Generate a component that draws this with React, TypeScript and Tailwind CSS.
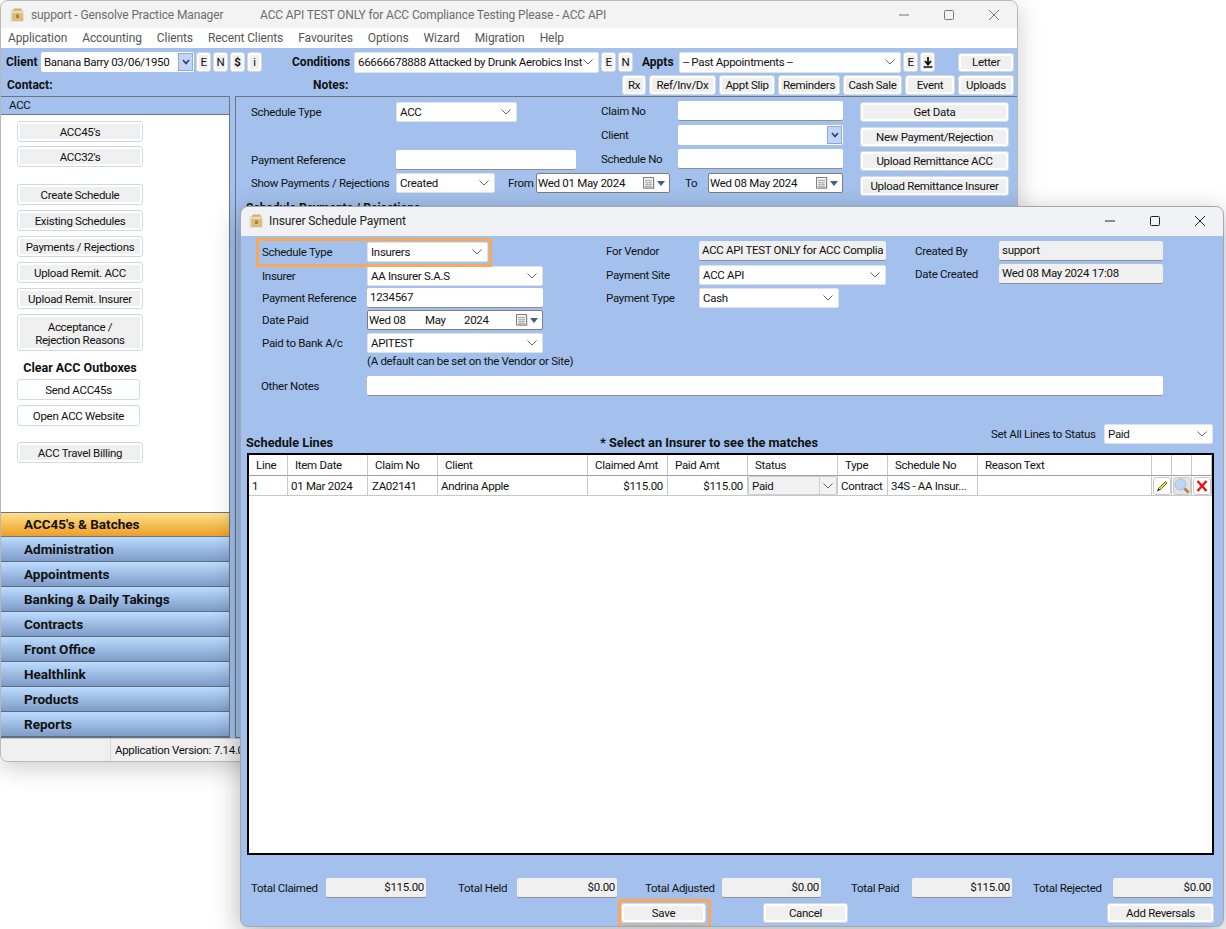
import type { ReactNode } from "react";

const columns = [
  "Line",
  "Item Date",
  "Claim No",
  "Client",
  "Claimed Amt",
  "Paid Amt",
  "Status",
  "Type",
  "Schedule No",
  "Reason Text",
  "",
  "",
  ""
];

const navItems = [
  "Administration",
  "Appointments",
  "Banking & Daily Takings",
  "Contracts",
  "Front Office",
  "Healthlink",
  "Products",
  "Reports"
];

const totals = [
  { label: "Total Claimed", value: "$115.00", className: "ml-[10px] w-[75px]", box: "w-[100px]" },
  { label: "Total Held", value: "$0.00", className: "ml-[32px] w-[59px]", box: "w-[100px]" },
  { label: "Total Adjusted", value: "$0.00", className: "ml-[28px] w-[77px]", box: "w-[99px]" },
  { label: "Total Paid", value: "$115.00", className: "ml-[30px] w-[61px]", box: "w-[100px]" },
  { label: "Total Rejected", value: "$0.00", className: "ml-[21px] w-[80px]", box: "w-[100px]" }
];

function BoxIcon({ className = "" }: { className?: string }) {
  return (
    <svg viewBox="0 0 14 14" className={`h-[14px] w-[14px] shrink-0 ${className}`}>
      <rect x="0" y="2" width="14" height="12" rx="1.5" fill="#d8d8d8" opacity="0.6" />
      <path d="M2 4 3.5 1h8L13 4v9H2z" fill="#dcbd7c" />
      <path d="M2 4h11" stroke="#f4e3b8" strokeWidth="1.4" />
      <path d="M3.5 1h8" stroke="#bfa06a" strokeWidth="0.8" />
      <rect x="6" y="6.5" width="3" height="3.5" fill="#a5833f" />
    </svg>
  );
}

function WindowControls({ dark }: { dark?: boolean }) {
  const stroke = dark ? "#222" : "#777";
  return (
    <div className="ml-auto flex items-center">
      <svg viewBox="0 0 10 10" className="h-[10px] w-[10px]">
        <path d="M0 5h10" stroke={stroke} strokeWidth="1" />
      </svg>
      <svg viewBox="0 0 10 10" className="ml-[35px] h-[10px] w-[10px]">
        <rect x="0.5" y="0.5" width="9" height="9" rx="1" fill="none" stroke={stroke} />
      </svg>
      <svg viewBox="0 0 10 10" className="ml-[35px] h-[10px] w-[10px]">
        <path d="M0 0 10 10M10 0 0 10" stroke={stroke} strokeWidth="1" />
      </svg>
    </div>
  );
}

function Chevron({ className = "" }: { className?: string }) {
  return (
    <svg viewBox="0 0 10 6" className={`h-[6px] w-[10px] shrink-0 ${className}`}>
      <path d="M0.5 0.5 5 5 9.5 0.5" fill="none" stroke="#666" strokeWidth="1" />
    </svg>
  );
}

function Label({ children, className = "" }: { children: ReactNode; className?: string }) {
  return <span className={`shrink-0 whitespace-nowrap pt-[2px] ${className}`}>{children}</span>;
}

function Btn({ children, className = "" }: { children: ReactNode; className?: string }) {
  return (
    <div
      className={`flex shrink-0 items-center justify-center rounded-[3px] border border-[#d3d9e2] bg-[#f0f0f0] pt-[2px] text-center text-[#111] shadow-[inset_0_0_0_2px_#fff] ${className}`}
    >
      {children}
    </div>
  );
}

function Combo({ value, className = "" }: { value: string; className?: string }) {
  return (
    <div
      className={`flex shrink-0 items-center justify-between overflow-hidden whitespace-nowrap rounded-[2px] border border-[#dde3ec] bg-white pl-[3px] pr-[5px] text-[#111] ${className}`}
    >
      <span className="overflow-hidden pt-[2px]">{value}</span>
      <Chevron />
    </div>
  );
}

function BlueCombo({ value, className = "" }: { value: string; className?: string }) {
  return (
    <div className={`flex shrink-0 items-center overflow-hidden whitespace-nowrap rounded-[2px] bg-white pl-[3px] text-[#111] ${className}`}>
      <span className="flex-1 pt-[1px]">{value}</span>
      <div className="mr-px flex h-[calc(100%-2px)] w-[15px] items-center justify-center border border-[#8fa9dc] bg-[#c3d5f6]">
        <svg viewBox="0 0 8 6" className="h-[6px] w-[8px]">
          <path d="M1 1 4 4.5 7 1" fill="none" stroke="#2d3f66" strokeWidth="1.6" />
        </svg>
      </div>
    </div>
  );
}

function TextBox({ value = "", className = "" }: { value?: string; className?: string }) {
  return (
    <div
      className={`flex shrink-0 items-center overflow-hidden whitespace-nowrap rounded-[2px] border-b border-b-[#8f8f8f] bg-white px-[3px] pt-[1px] text-[#111] ${className}`}
    >
      {value}
    </div>
  );
}

function ReadBox({ value, className = "" }: { value: string; className?: string }) {
  return (
    <div
      className={`flex shrink-0 items-center overflow-hidden whitespace-nowrap rounded-[2px] border-b border-b-[#8f8f8f] bg-[#f0f0f0] px-[3px] pt-[1px] text-[#111] ${className}`}
    >
      {value}
    </div>
  );
}

function DateBox({ children, className = "" }: { children: ReactNode; className?: string }) {
  return (
    <div
      className={`flex shrink-0 items-center whitespace-nowrap rounded-[2px] border border-[#7d7d7d] bg-white pl-[1px] pr-[4px] text-[#111] ${className}`}
    >
      <div className="flex-1 pt-[1px]">{children}</div>
      <svg viewBox="0 0 12 12" className="h-[12px] w-[12px]">
        <rect x="1.5" y="1.5" width="10" height="10.5" fill="#c9c9c9" />
        <rect x="0.5" y="0.5" width="10" height="10.5" fill="#efefef" stroke="#85807a" />
        <path d="M2 3h7v1H2z" fill="#a8a8a8" />
        <path d="M2 5.5h7M2 7.5h7M2 9.5h7M4 5v5M7 5v5" stroke="#a8a8a8" strokeWidth="0.8" />
      </svg>
      <svg viewBox="0 0 8 5" className="ml-[2px] h-[5px] w-[8px]">
        <path d="M0 0h8L4 5z" fill="#3f5f8f" />
      </svg>
    </div>
  );
}

function Bold({ children, className = "", size = "text-[12px]" }: { children: ReactNode; className?: string; size?: string }) {
  return <span className={`whitespace-nowrap font-bold leading-[14px] tracking-normal text-[#111] ${size} ${className}`}>{children}</span>;
}

function LeftBtn({ children, className = "", height = "h-[21px]" }: { children: ReactNode; className?: string; height?: string }) {
  return <Btn className={`w-[126px] border-[#c8c8c8] ${height} ${className}`}>{children}</Btn>;
}

function MainWindow() {
  return (
    <div className="absolute left-0 top-0 flex h-[762px] w-[1018px] flex-col overflow-hidden rounded-[8px] border border-[#b8b8b8] bg-[#f0f0f0] shadow-[0_6px_24px_rgba(0,0,0,0.2)]">
      <div className="flex h-[27px] shrink-0 items-center bg-[#f3f3f3] pl-[9px] pr-[18px] text-[12px] tracking-[-0.13px] text-[#6d6d6d]">
        <BoxIcon />
        <span className="ml-[7px] w-[229px]">support - Gensolve Practice Manager</span>
        <span>ACC API TEST ONLY for ACC Compliance Testing Please - ACC API</span>
        <WindowControls />
      </div>

      <div className="flex h-[20px] shrink-0 items-center gap-[15px] bg-white pl-[7px] text-[12px] tracking-[-0.1px] text-[#555]">
        {["Application", "Accounting", "Clients", "Recent Clients", "Favourites", "Options", "Wizard", "Migration", "Help"].map(
          (item) => (
            <span key={item}>{item}</span>
          )
        )}
      </div>

      <div className="flex h-[48px] shrink-0 flex-col bg-[#a3c1ec]">
        <div className="mt-[3px] flex h-[22px] items-center pl-[5px]">
          <Bold className="w-[35px]">Client</Bold>
          <BlueCombo value="Banana Barry 03/06/1950" className="h-[20px] w-[153px]" />
          <div className="ml-[2px] flex gap-[2px]">
            <Btn className="h-[20px] w-[15px]">E</Btn>
            <Btn className="h-[20px] w-[15px]">N</Btn>
            <Btn className="h-[20px] w-[15px] font-bold">$</Btn>
            <Btn className="h-[20px] w-[15px]">i</Btn>
          </div>
          <Bold className="ml-[30px] w-[62px]">Conditions</Bold>
          <Combo value="66666678888 Attacked by Drunk Aerobics Inst" className="h-[21px] w-[245px]" />
          <Btn className="ml-[2px] h-[20px] w-[15px]">E</Btn>
          <Btn className="ml-[2px] h-[20px] w-[15px]">N</Btn>
          <Bold className="ml-[9px] w-[37px]">Appts</Bold>
          <Combo value="-- Past Appointments --" className="h-[21px] w-[222px]" />
          <Btn className="ml-[2px] h-[20px] w-[15px]">E</Btn>
          <Btn className="ml-[2px] h-[20px] w-[15px] !pt-0">
            <svg viewBox="0 0 10 11" className="h-[11px] w-[10px]">
              <path d="M5 0v6M2 4l3 3.5L8 4" fill="none" stroke="#111" strokeWidth="1.8" />
              <path d="M0.5 10h9" stroke="#111" strokeWidth="1.4" />
            </svg>
          </Btn>
          <Btn className="ml-[23px] h-[19px] w-[56px]">Letter</Btn>
        </div>
        <div className="mt-[1px] flex h-[21px] items-center pl-[6px]">
          <Bold className="w-[306px]">Contact:</Bold>
          <Bold>Notes:</Bold>
          <div className="ml-auto mr-[3px] flex gap-[3px]">
            <Btn className="h-[20px] w-[24px]">Rx</Btn>
            <Btn className="h-[20px] w-[67px]">Ref/Inv/Dx</Btn>
            <Btn className="h-[20px] w-[56px]">Appt Slip</Btn>
            <Btn className="h-[20px] w-[62px]">Reminders</Btn>
            <Btn className="h-[20px] w-[59px]">Cash Sale</Btn>
            <Btn className="h-[20px] w-[50px]">Event</Btn>
            <Btn className="h-[20px] w-[56px]">Uploads</Btn>
          </div>
        </div>
      </div>

      <div className="flex min-h-0 flex-1 bg-[#a3c1ec]">
        <div className="flex w-[229px] shrink-0 flex-col border border-l-0 border-[#6c7480] bg-white">
          <div className="flex h-[18px] shrink-0 items-center border-b border-[#6c7480] bg-[#a3c1ec] pl-[8px] pt-[1px] text-[#111]">ACC</div>
          <div className="flex flex-1 flex-col items-start pl-[16px] pt-[6px]">
            <LeftBtn>ACC45's</LeftBtn>
            <LeftBtn className="mt-[4px]">ACC32's</LeftBtn>
            <LeftBtn className="mt-[17px]">Create Schedule</LeftBtn>
            <LeftBtn className="mt-[5px]">Existing Schedules</LeftBtn>
            <LeftBtn className="mt-[5px]">Payments / Rejections</LeftBtn>
            <LeftBtn className="mt-[5px]">Upload Remit. ACC</LeftBtn>
            <LeftBtn className="mt-[5px]">Upload Remit. Insurer</LeftBtn>
            <LeftBtn className="mt-[5px] leading-[13px]" height="h-[37px]">
              Acceptance /<br />
              Rejection Reasons
            </LeftBtn>
            <Bold className="mt-[10px] w-[126px] text-center" size="text-[12.5px]">
              Clear ACC Outboxes
            </Bold>
            <Btn className="mt-[4px] h-[21px] w-[123px] border-[#c8c8c8] bg-white">Send ACC45s</Btn>
            <Btn className="mt-[5px] h-[21px] w-[123px] border-[#c8c8c8] bg-white">Open ACC Website</Btn>
            <LeftBtn className="mt-[16px]">ACC Travel Billing</LeftBtn>
          </div>
          <div className="flex h-[25px] shrink-0 items-center border-y border-[#6c7480] bg-[linear-gradient(#fde08c,#ef9f25)] pl-[23px] text-[13.5px] font-bold tracking-normal text-[#111]">
            ACC45's &amp; Batches
          </div>
          {navItems.map((item) => (
            <div
              key={item}
              className="flex h-[25px] shrink-0 items-center border-b border-[#5f6b7c] bg-[linear-gradient(#bcdcff,#7e9cc8)] pl-[23px] text-[13.5px] font-bold tracking-normal text-[#111]"
            >
              {item}
            </div>
          ))}
        </div>

        <div className="ml-[5px] flex min-w-0 flex-1 flex-col border border-r-0 border-[#6c7480] bg-[#a3c1ec] pl-[15px] text-[#111]">
          <div className="flex">
            <div className="mt-[5px] flex w-[350px] shrink-0 flex-col">
              <div className="flex h-[20px] items-center">
                <Label className="w-[145px]">Schedule Type</Label>
                <Combo value="ACC" className="h-[20px] w-[121px]" />
              </div>
              <div className="mt-[28px] flex h-[20px] items-center">
                <Label className="w-[145px]">Payment Reference</Label>
                <TextBox className="h-[20px] w-[180px]" />
              </div>
              <div className="mt-[3px] flex h-[20px] items-center">
                <Label className="w-[145px]">Show Payments / Rejections</Label>
                <Combo value="Created" className="h-[20px] w-[99px]" />
                <Label className="ml-[13px] w-[28px]">From</Label>
                <DateBox className="h-[20px] w-[134px]">Wed 01 May 2024</DateBox>
              </div>
            </div>
            <div className="mt-[4px] flex w-[243px] shrink-0 flex-col">
              <div className="flex h-[20px] items-center">
                <Label className="w-[77px]">Claim No</Label>
                <TextBox className="h-[20px] w-[165px]" />
              </div>
              <div className="mt-[4px] flex h-[20px] items-center">
                <Label className="w-[77px]">Client</Label>
                <BlueCombo value="" className="h-[20px] w-[165px]" />
              </div>
              <div className="mt-[4px] flex h-[20px] items-center">
                <Label className="w-[77px]">Schedule No</Label>
                <TextBox className="h-[20px] w-[165px]" />
              </div>
              <div className="mt-[4px] flex h-[20px] items-center">
                <Label className="ml-[84px] w-[23px]">To</Label>
                <DateBox className="h-[20px] w-[135px]">Wed 08 May 2024</DateBox>
              </div>
            </div>
            <div className="ml-[16px] mt-[5px] flex w-[149px] flex-col gap-[4.5px]">
              <Btn className="h-[20px] w-[149px]">Get Data</Btn>
              <Btn className="h-[20px] w-[149px]">New Payment/Rejection</Btn>
              <Btn className="h-[20px] w-[149px]">Upload Remittance ACC</Btn>
              <Btn className="h-[20px] w-[149px]">Upload Remittance Insurer</Btn>
            </div>
          </div>
          <Bold className="ml-[-5px] mt-[5px]">Schedule Payments / Rejections</Bold>
        </div>
      </div>

      <div className="flex h-[23px] shrink-0 items-center border-t border-[#c8c8c8] bg-[#f0f0f0] pl-[109px] text-[#111]">
        <div className="flex h-full items-center whitespace-nowrap border-l border-[#d8d8d8] pl-[4px] pt-[2px]">Application Version: 7.14.0</div>
      </div>
    </div>
  );
}

function IconBtn({ children, className = "bg-white" }: { children: ReactNode; className?: string }) {
  return (
    <div className={`flex h-[18px] w-[18px] items-center justify-center rounded-[3px] border border-[#c8c8c8] ${className}`}>{children}</div>
  );
}

function ScheduleTable() {
  const rowCell = "flex h-[20px] items-center overflow-hidden whitespace-nowrap border-r border-b border-[#c8c8c8]";
  return (
    <div className="ml-[6px] h-[402px] w-[967px] shrink-0 border-2 border-black bg-white">
      <div className="grid grid-cols-[39px_80px_70px_150px_80px_80px_90px_50px_90px_174px_20px_20px_20px]">
        {columns.map((column, index) => (
          <div key={index} className="flex h-[21px] items-center border-r border-b border-[#c8c8c8] border-b-[#a0a0a0] pl-[7px] pt-[2px]">
            {column}
          </div>
        ))}
        <div className={`${rowCell} pl-[3px] pt-[2px]`}>1</div>
        <div className={`${rowCell} pl-[3px] pt-[2px]`}>01 Mar 2024</div>
        <div className={`${rowCell} pl-[4px] pt-[2px]`}>ZA02141</div>
        <div className={`${rowCell} pl-[3px] pt-[2px]`}>Andrina Apple</div>
        <div className={`${rowCell} justify-end pr-[4px] pt-[2px]`}>$115.00</div>
        <div className={`${rowCell} justify-end pr-[4px] pt-[2px]`}>$115.00</div>
        <div className={rowCell}>
          <div className="flex h-[19px] w-full items-center justify-between rounded-[2px] border border-[#cfcfcf] bg-[#f2f2f2] pl-[3px] pr-[3px]">
            <span className="pt-[2px]">Paid</span>
            <span className="flex h-full items-center border-l border-[#cfcfcf] pl-[3px]">
              <Chevron />
            </span>
          </div>
        </div>
        <div className={`${rowCell} pl-[3px] pt-[2px]`}>Contract</div>
        <div className={`${rowCell} pl-[3px] pt-[2px]`}>34S - AA Insur...</div>
        <div className={rowCell} />
        <div className={`${rowCell} justify-center`}>
          <IconBtn>
            <svg viewBox="0 0 14 14" className="h-[14px] w-[14px]">
              <path d="M3.5 9.5 10.5 2.5l1.5 1.5L5 11z" fill="#f2e21e" stroke="#3a3500" strokeWidth="0.7" />
              <path d="M1.5 12.5 3.5 9.5 5 11z" fill="#111" />
            </svg>
          </IconBtn>
        </div>
        <div className={`${rowCell} justify-center`}>
          <IconBtn className="bg-[#e4e4e4]">
            <svg viewBox="0 0 16 16" className="h-[16px] w-[16px]">
              <circle cx="6.5" cy="6.5" r="5.5" fill="#bcd6f5" stroke="#a9c1df" />
              <path d="M10.5 10.5 14.5 14.5" stroke="#b5824d" strokeWidth="2.6" />
            </svg>
          </IconBtn>
        </div>
        <div className={`${rowCell} justify-center`}>
          <IconBtn>
            <svg viewBox="0 0 12 12" className="h-[12px] w-[12px]">
              <path d="M1.5 1 10.5 11M10.5 1 1.5 11" stroke="#ee1010" strokeWidth="2.4" />
            </svg>
          </IconBtn>
        </div>
      </div>
    </div>
  );
}

function DialogWindow() {
  return (
    <div className="absolute left-[240px] top-[206px] flex h-[721px] w-[984px] flex-col overflow-hidden rounded-[8px] border border-[#a0a8b4] bg-[#a3c1ec] text-[#111] shadow-[0_8px_28px_rgba(0,0,0,0.3)]">
      <div className="flex h-[29px] shrink-0 items-center bg-[#f0f2f5] pb-[1px] pl-[8px] pr-[18px] text-[12px] tracking-[-0.1px] text-[#222]">
        <BoxIcon />
        <span className="ml-[6px]">Insurer Schedule Payment</span>
        <WindowControls dark />
      </div>

      <div className="flex h-[140px] shrink-0 pt-[5px]">
        <div className="ml-[21px] mt-[1px] flex w-[344px] shrink-0 flex-col">
          <div className="flex h-[20px] items-center">
            <Label className="w-[105px]">Schedule Type</Label>
            <Combo value="Insurers" className="h-[20px] w-[121px]" />
          </div>
          <div className="mt-[4px] flex h-[20px] items-center">
            <Label className="w-[105px]">Insurer</Label>
            <Combo value="AA Insurer S.A.S" className="h-[20px] w-[176px]" />
          </div>
          <div className="mt-[2px] flex h-[20px] items-center">
            <Label className="w-[105px]">Payment Reference</Label>
            <TextBox value="1234567" className="h-[20px] w-[176px]" />
          </div>
          <div className="mt-[2px] flex h-[20px] items-center">
            <Label className="w-[105px]">Date Paid</Label>
            <DateBox className="h-[20px] w-[176px]">
              <span className="inline-block w-[56px]">Wed 08</span>
              <span className="inline-block w-[39px]">May</span>
              2024
            </DateBox>
          </div>
          <div className="mt-[3px] flex h-[20px] items-center">
            <Label className="w-[105px]">Paid to Bank A/c</Label>
            <Combo value="APITEST" className="h-[20px] w-[176px]" />
          </div>
          <span className="ml-[105px] whitespace-nowrap leading-[16px]">(A default can be set on the Vendor or Site)</span>
        </div>
        <div className="flex w-[309px] shrink-0 flex-col">
          <div className="flex h-[20px] items-center">
            <Label className="w-[93px]">For Vendor</Label>
            <ReadBox value="ACC API TEST ONLY for ACC Complia" className="h-[20px] w-[187px]" />
          </div>
          <div className="mt-[4px] flex h-[20px] items-center">
            <Label className="w-[93px]">Payment Site</Label>
            <Combo value="ACC API" className="h-[20px] w-[187px]" />
          </div>
          <div className="mt-[3px] flex h-[20px] items-center">
            <Label className="w-[93px]">Payment Type</Label>
            <Combo value="Cash" className="h-[20px] w-[140px]" />
          </div>
        </div>
        <div className="flex w-[248px] shrink-0 flex-col">
          <div className="flex h-[20px] items-center">
            <Label className="w-[84px]">Created By</Label>
            <ReadBox value="support" className="h-[20px] w-[164px]" />
          </div>
          <div className="mt-[3px] flex h-[20px] items-center">
            <Label className="w-[84px]">Date Created</Label>
            <ReadBox value="Wed 08 May 2024 17:08" className="h-[20px] w-[164px]" />
          </div>
        </div>
      </div>

      <div className="flex h-[20px] shrink-0 items-center pl-[20px]">
        <Label className="w-[106px]">Other Notes</Label>
        <TextBox className="h-[20px] w-[796px]" />
      </div>

      <div className="mt-[27px] flex h-[30px] shrink-0 pl-[5px]">
        <Bold className="mt-[13px] w-[354px]" size="text-[12.75px]">
          Schedule Lines
        </Bold>
        <Bold className="mt-[13px] w-[391px]" size="text-[12.75px]">
          * Select an Insurer to see the matches
        </Bold>
        <span className="mt-[3px] w-[113px] whitespace-nowrap">Set All Lines to Status</span>
        <Combo value="Paid" className="mt-[1px] h-[20px] w-[109px]" />
      </div>

      <ScheduleTable />

      <div className="mt-[23px] flex h-[20px] shrink-0 items-center">
        {totals.map((total) => (
          <div key={total.label} className="flex items-center">
            <Label className={total.className}>{total.label}</Label>
            <div
              className={`flex h-[20px] items-center justify-end rounded-[2px] border-b border-b-[#8f8f8f] bg-[#f0f0f0] pr-[2px] pt-[1px] ${total.box}`}
            >
              {total.value}
            </div>
          </div>
        ))}
      </div>

      <div className="mt-[5px] flex h-[20px] shrink-0 items-center">
        <Btn className="ml-[380px] h-[20px] w-[85px]">Save</Btn>
        <Btn className="ml-[57px] h-[20px] w-[85px]">Cancel</Btn>
        <Btn className="ml-[259px] h-[20px] w-[107px]">Add Reversals</Btn>
      </div>

      {/* orange callouts sit over the form */}
      <div className="absolute left-[15px] top-[31px] h-[29px] w-[236px] border-[3px] border-[#f9a855]" />
      <div className="absolute left-[377px] top-[692px] h-[29px] w-[93px] border-[3px] border-[#f9a855]" />
    </div>
  );
}

export default function App() {
  return (
    <div className="relative h-[929px] w-[1226px] overflow-hidden bg-white font-['Roboto',sans-serif] text-[11.5px] tracking-[-0.3px]">
      <MainWindow />
      <DialogWindow />
    </div>
  );
}
